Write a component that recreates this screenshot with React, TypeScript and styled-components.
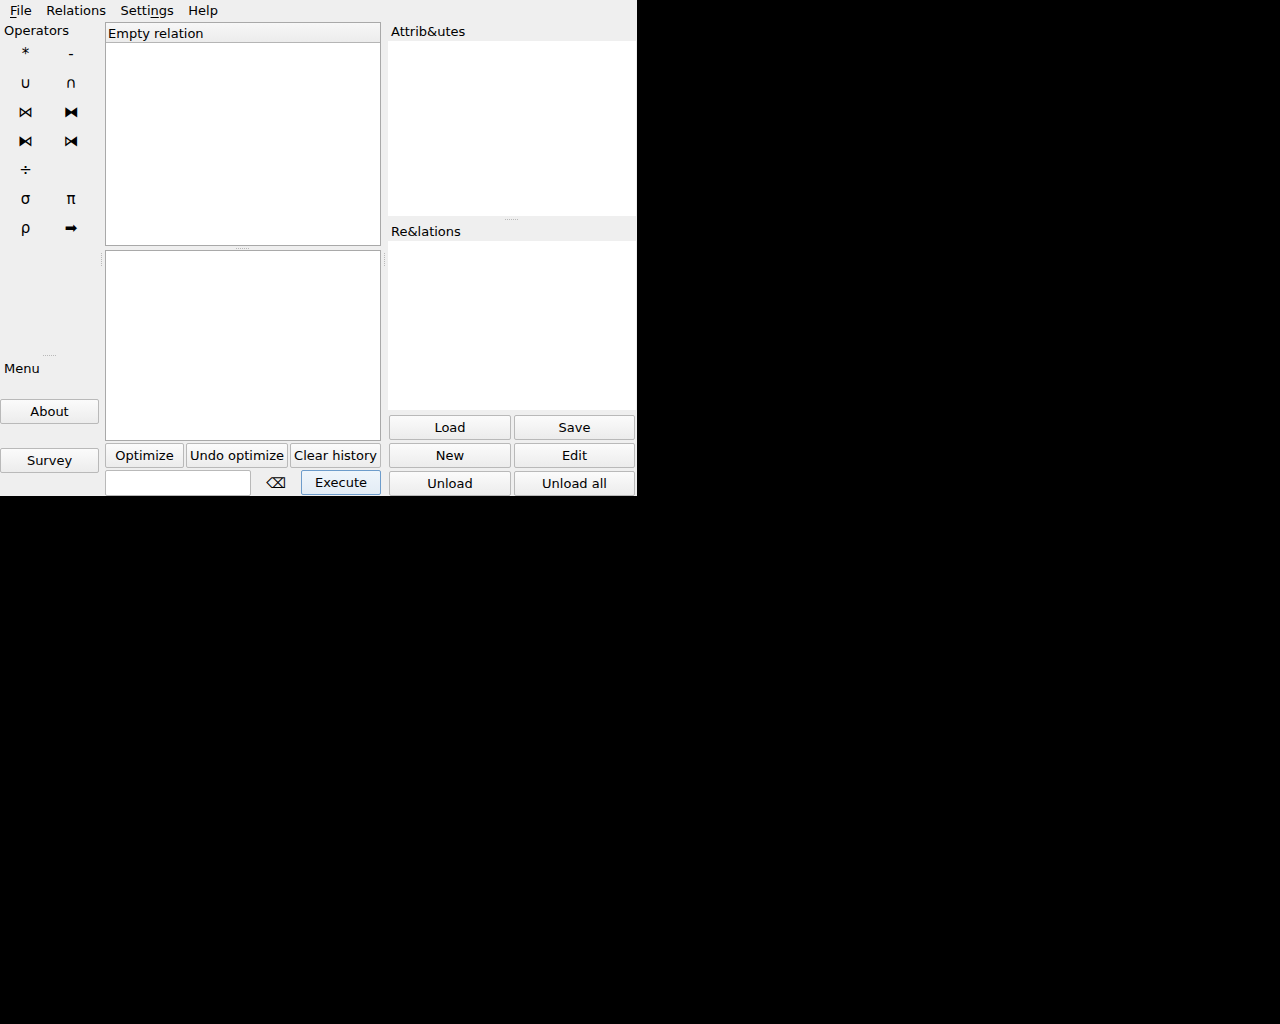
import React from "react";
import styled, { createGlobalStyle } from "styled-components";

const Global = createGlobalStyle`
  html, body { margin: 0; padding: 0; background: #000; }
  body { font-family: "DejaVu Sans", "Noto Sans", sans-serif; font-size: 13px; color: #000; }
  * { box-sizing: border-box; }
`;

const Window = styled.div`
  width: 637px;
  height: 496px;
  background: #efefef;
  display: flex;
  flex-direction: column;
  overflow: hidden;
`;

const MenuBar = styled.div`
  height: 22px;
  display: flex;
  align-items: center;
  gap: 0.5px;
  padding-left: 3px;
  padding-bottom: 2px;
`;

const MenuItem = styled.span`
  padding: 0 7px;
  white-space: nowrap;
  u { text-decoration: underline; text-underline-offset: 2px; }
`;

const Main = styled.div`
  flex: 1;
  display: flex;
  flex-direction: row;
  min-height: 0;
`;

const LeftCol = styled.div`
  width: 100px;
  display: flex;
  flex-direction: column;
`;

const OpPane = styled.div`
  height: 330px;
  display: flex;
  flex-direction: column;
`;

const GroupLabel = styled.div<{ $h: number; $pad: number; $pt?: number }>`
  height: ${(p) => p.$h}px;
  padding-top: ${(p) => p.$pt ?? 0}px;
  line-height: ${(p) => p.$h - (p.$pt ?? 0)}px;
  padding-left: ${(p) => p.$pad}px;
  white-space: nowrap;
`;

const OpGrid = styled.div`
  display: grid;
  grid-template-columns: 45px 46px;
  grid-auto-rows: 29px;
  margin-left: 3px;
`;

const OpButton = styled.div`
  display: flex;
  align-items: center;
  justify-content: center;
  font-size: 15px;
`;

const HSplit = styled.div<{ $h: number }>`
  height: ${(p) => p.$h}px;
  display: flex;
  align-items: center;
  justify-content: center;
`;

const HDots = styled.div`
  width: 14px;
  height: 1px;
  background: repeating-linear-gradient(90deg, #b9b9b9 0 1px, transparent 1px 2px);
`;

const VSplit = styled.div<{ $dx: number }>`
  width: 5px;
  display: flex;
  padding-top: 231px;
  padding-left: ${(p) => p.$dx}px;
`;

const VDots = styled.div`
  width: 1px;
  height: 14px;
  background: repeating-linear-gradient(180deg, #b9b9b9 0 1px, transparent 1px 2px);
`;

const Btn = styled.button<{ $primary?: boolean; $w?: number }>`
  font-family: inherit;
  font-size: 13px;
  color: #000;
  height: 25px;
  width: ${(p) => (p.$w ? `${p.$w}px` : "100%")};
  padding: 0;
  border-radius: 2px;
  border: 1px solid ${(p) => (p.$primary ? "#6d9ccb" : "#b9b9b9")};
  background: ${(p) =>
    p.$primary
      ? "linear-gradient(#eef5fb, #e3ecf5)"
      : "linear-gradient(#fbfbfb, #ececec)"};
  white-space: nowrap;
`;

const MenuBtnWrap = styled.div<{ $mt: number }>`
  margin-top: ${(p) => p.$mt}px;
  width: 99px;
`;

const MidCol = styled.div`
  width: 276px;
  display: flex;
  flex-direction: column;
`;

const Table = styled.div`
  height: 224px;
  background: #fff;
  border: 1px solid #a9a9a9;
  display: flex;
  flex-direction: column;
`;

const TableHeader = styled.div`
  height: 20px;
  line-height: 21px;
  padding-left: 2px;
  background: linear-gradient(#f7f7f7, #ececec);
  border-bottom: 1px solid #b5b5b5;
`;

const TextEdit = styled.div`
  height: 191px;
  background: #fff;
  border: 1px solid #a9a9a9;
`;

const ButtonRow = styled.div`
  display: flex;
  gap: 2px;
  margin-top: 2px;
`;

const InputRow = styled.div`
  display: flex;
  align-items: center;
  margin-top: 1px;
  height: 27px;
`;

const LineEdit = styled.div`
  width: 146px;
  height: 26px;
  background: #fff;
  border: 1px solid #b9b9b9;
  border-radius: 2px;
`;

const ClearIcon = styled.div`
  width: 50px;
  text-align: center;
  font-size: 14px;
`;

const RightCol = styled.div`
  width: 251px;
  display: flex;
  flex-direction: column;
`;

const WhiteList = styled.div<{ $h: number }>`
  height: ${(p) => p.$h}px;
  margin: 0 1px 0 2px;
  background: #fff;
`;

const RelButtons = styled.div`
  display: grid;
  grid-template-columns: 122px 121px;
  grid-auto-rows: 25px;
  column-gap: 3px;
  row-gap: 3px;
  margin-top: 5px;
  padding-left: 3px;
`;

const ops: [string, string][] = [
  ["*", "-"],
  ["∪", "∩"],
  ["⋈", "⧓"],
  ["⧑", "⧒"],
  ["÷", ""],
  ["σ", "π"],
  ["ρ", "➡"],
];

export default function App() {
  return (
    <>
      <Global />
      <Window>
        <MenuBar>
          <MenuItem>
            <u>F</u>ile
          </MenuItem>
          <MenuItem>Relations</MenuItem>
          <MenuItem>
            Setti<u>n</u>gs
          </MenuItem>
          <MenuItem>Help</MenuItem>
        </MenuBar>
        <Main>
          <LeftCol>
            <OpPane>
              <GroupLabel $h={17} $pad={4} $pt={1}>Operators</GroupLabel>
              <OpGrid>
                {ops.flat().map((o, i) => (
                  <OpButton key={i}>{o}</OpButton>
                ))}
              </OpGrid>
            </OpPane>
            <HSplit $h={6}>
              <HDots />
            </HSplit>
            <GroupLabel $h={20} $pad={4} $pt={1}>Menu</GroupLabel>
            <MenuBtnWrap $mt={21}>
              <Btn>About</Btn>
            </MenuBtnWrap>
            <MenuBtnWrap $mt={24}>
              <Btn>Survey</Btn>
            </MenuBtnWrap>
          </LeftCol>
          <VSplit $dx={1}>
            <VDots />
          </VSplit>
          <MidCol>
            <Table>
              <TableHeader>Empty relation</TableHeader>
            </Table>
            <HSplit $h={4}>
              <HDots />
            </HSplit>
            <TextEdit />
            <ButtonRow>
              <Btn $w={79}>Optimize</Btn>
              <Btn $w={102}>Undo optimize</Btn>
              <Btn $w={91}>Clear history</Btn>
            </ButtonRow>
            <InputRow>
              <LineEdit />
              <ClearIcon>⌫</ClearIcon>
              <Btn $primary $w={80}>Execute</Btn>
            </InputRow>
          </MidCol>
          <VSplit $dx={3}>
            <VDots />
          </VSplit>
          <RightCol>
            <GroupLabel $h={19} $pad={5}>Attrib&amp;utes</GroupLabel>
            <WhiteList $h={175} />
            <HSplit $h={6}>
              <HDots />
            </HSplit>
            <GroupLabel $h={19} $pad={5}>Re&amp;lations</GroupLabel>
            <WhiteList $h={169} />
            <RelButtons>
              <Btn>Load</Btn>
              <Btn>Save</Btn>
              <Btn>New</Btn>
              <Btn>Edit</Btn>
              <Btn>Unload</Btn>
              <Btn>Unload all</Btn>
            </RelButtons>
          </RightCol>
        </Main>
      </Window>
    </>
  );
}
